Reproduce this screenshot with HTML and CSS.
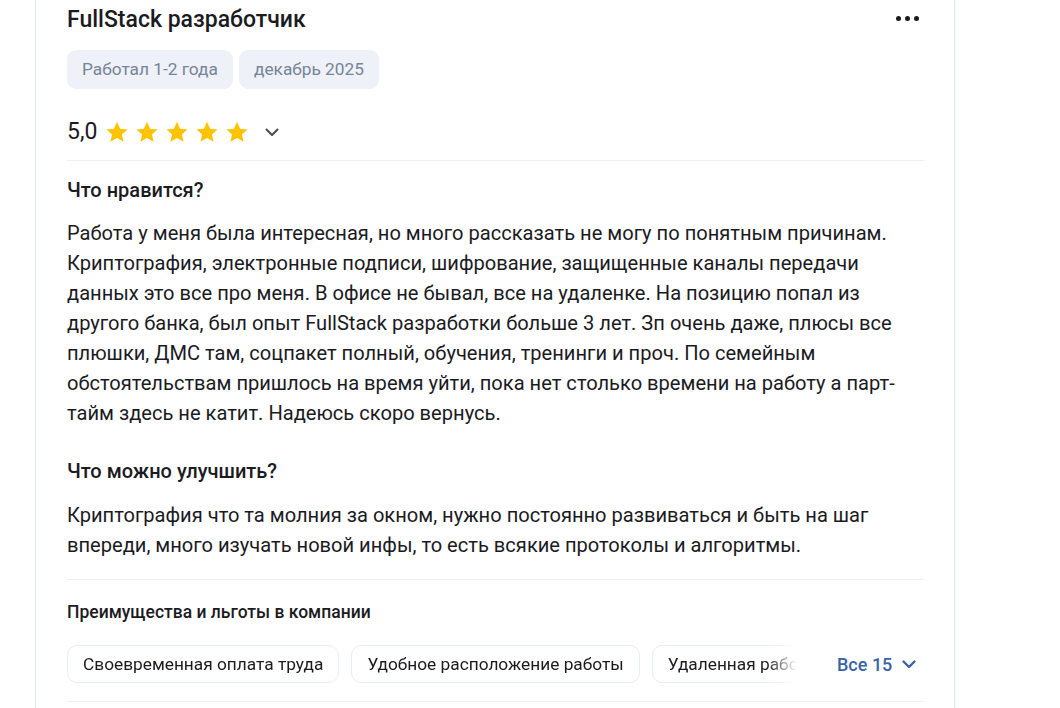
FILE: index.html
```html
<!DOCTYPE html>
<html lang="ru">
<head>
<meta charset="utf-8">
<link rel="stylesheet" href="styles.css">
</head>
<body>
<div class="page">
  <article class="card">
    <header class="head">
      <h2 class="title">FullStack разработчик</h2>
      <button class="more" aria-label="Ещё">
        <span></span><span></span><span></span>
      </button>
    </header>
    <div class="tags">
      <span class="tag">Работал 1-2 года</span>
      <span class="tag">декабрь 2025</span>
    </div>
    <div class="rating">
      <span class="score">5,0</span>
      <span class="stars">
        <svg viewBox="0 0 24 24" class="star"><path d="M12 1.8l3.1 6.9 7.4.7-5.6 5 1.7 7.4L12 17.9l-6.6 3.9 1.7-7.4-5.6-5 7.4-.7z"/></svg>
        <svg viewBox="0 0 24 24" class="star"><path d="M12 1.8l3.1 6.9 7.4.7-5.6 5 1.7 7.4L12 17.9l-6.6 3.9 1.7-7.4-5.6-5 7.4-.7z"/></svg>
        <svg viewBox="0 0 24 24" class="star"><path d="M12 1.8l3.1 6.9 7.4.7-5.6 5 1.7 7.4L12 17.9l-6.6 3.9 1.7-7.4-5.6-5 7.4-.7z"/></svg>
        <svg viewBox="0 0 24 24" class="star"><path d="M12 1.8l3.1 6.9 7.4.7-5.6 5 1.7 7.4L12 17.9l-6.6 3.9 1.7-7.4-5.6-5 7.4-.7z"/></svg>
        <svg viewBox="0 0 24 24" class="star"><path d="M12 1.8l3.1 6.9 7.4.7-5.6 5 1.7 7.4L12 17.9l-6.6 3.9 1.7-7.4-5.6-5 7.4-.7z"/></svg>
      </span>
      <svg class="chev" viewBox="0 0 16 16"><path d="M2.5 5.5l5.5 5.5 5.5-5.5" /></svg>
    </div>
    <div class="divider"></div>
    <section class="block">
      <h3 class="block-title">Что нравится?</h3>
      <p class="text">Работа у меня была интересная, но много рассказать не могу по понятным причинам. Криптография, электронные подписи, шифрование, защищенные каналы передачи данных это все про меня. В офисе не бывал, все на удаленке. На позицию попал из другого банка, был опыт FullStack разработки больше 3 лет. Зп очень даже, плюсы все плюшки, ДМС там, соцпакет полный, обучения, тренинги и проч. По семейным обстоятельствам пришлось на время уйти, пока нет столько времени на работу а парт-тайм здесь не катит. Надеюсь скоро вернусь.</p>
    </section>
    <section class="block block-second">
      <h3 class="block-title">Что можно улучшить?</h3>
      <p class="text">Криптография что та молния за окном, нужно постоянно развиваться и быть на шаг впереди, много изучать новой инфы, то есть всякие протоколы и алгоритмы.</p>
    </section>
    <div class="divider divider-b"></div>
    <h4 class="benefits-title">Преимущества и льготы в компании</h4>
    <div class="benefits">
      <div class="chips">
        <span class="chip">Своевременная оплата труда</span>
        <span class="chip">Удобное расположение работы</span>
        <span class="chip">Удаленная работа</span>
      </div>
      <button class="all">Все 15
        <svg class="chev-blue" viewBox="0 0 16 16"><path d="M2.5 5.5l5.5 5.5 5.5-5.5" /></svg>
      </button>
    </div>
    <div class="divider divider-c"></div>
  </article>
</div>
</body>
</html>
```
FILE: styles.css
```css
* { box-sizing: border-box; }
html, body { margin: 0; padding: 0; background: #fff; }
body {
  font-family: Roboto, "Noto Sans", Arial, sans-serif;
  color: #1b1b1f;
  height: 708px;
  overflow: hidden;
}
.page {
  padding-left: 35px;
}
.card {
  width: 920px;
  border-left: 1px solid #e1e6ee;
  border-right: 1px solid #e1e6ee;
  padding: 6px 30px 40px 31px;
  min-height: 708px;
}
.head {
  display: flex;
  justify-content: space-between;
  align-items: flex-start;
}
.title {
  margin: 0;
  font-size: 23px;
  line-height: 28px;
  font-weight: 500;
  color: #1b1b1f;
}
.more {
  display: flex;
  gap: 4px;
  padding: 0;
  margin: 10px 5px 0 0;
  border: 0;
  background: none;
  height: 5px;
}
.more span {
  width: 5px;
  height: 5px;
  border-radius: 50%;
  background: #1b1b1f;
}
.tags {
  display: flex;
  gap: 6px;
  margin-top: 16px;
}
.tag {
  background: #eef1f7;
  color: #768597;
  font-size: 17.3px;
  line-height: 39px;
  height: 39px;
  padding: 0 15px;
  border-radius: 9px;
}
.rating {
  display: flex;
  align-items: center;
  height: 28px;
  margin-top: 29px;
}
.score {
  font-size: 23px;
  line-height: 28px;
  font-weight: 400;
  margin-right: 8px;
}
.stars {
  display: flex;
  gap: 6px;
}
.star {
  width: 24px;
  height: 24px;
  fill: #ffc300;
}
.chev {
  width: 16px;
  height: 16px;
  margin-left: 15px;
  fill: none;
  stroke: #4a4a50;
  stroke-width: 2;
  stroke-linecap: round;
  stroke-linejoin: round;
}
.divider {
  height: 1px;
  background: #eef0f4;
  margin-top: 14px;
}
.block { margin-top: 17px; }
.block-second { margin-top: 31px; }
.block-title {
  margin: 0;
  font-size: 20px;
  line-height: 24px;
  font-weight: 500;
}
.text {
  margin: 16px 0 0;
  font-size: 20.1px;
  line-height: 30px;
  color: #1b1b1f;
}
.block-second .text { margin-top: 17px; }
.divider-b { margin-top: 19px; }
.benefits-title {
  margin: 21px 0 0;
  font-size: 17.5px;
  line-height: 22px;
  font-weight: 500;
}
.benefits {
  display: flex;
  align-items: center;
  margin-top: 22px;
}
.chips {
  display: flex;
  gap: 12px;
  width: 730px;
  flex: none;
  overflow: hidden;
  white-space: nowrap;
  -webkit-mask-image: linear-gradient(to right, #000 700px, transparent 730px);
  mask-image: linear-gradient(to right, #000 700px, transparent 730px);
}
.chip {
  flex: none;
  height: 38px;
  line-height: 36px;
  padding: 0 15px;
  border: 1px solid #e8ecf3;
  border-radius: 10px;
  font-size: 17.3px;
  color: #1b1b1f;
}
.all {
  display: flex;
  align-items: center;
  margin-left: 40px;
  padding: 0;
  border: 0;
  background: none;
  font-family: inherit;
  font-size: 18px;
  font-weight: 500;
  color: #3a63a6;
  gap: 9px;
  white-space: nowrap;
}
.chev-blue {
  width: 16px;
  height: 16px;
  fill: none;
  stroke: #3a63a6;
  stroke-width: 2.4;
  stroke-linecap: round;
  stroke-linejoin: round;
}
.divider-c { margin-top: 18px; }
```
